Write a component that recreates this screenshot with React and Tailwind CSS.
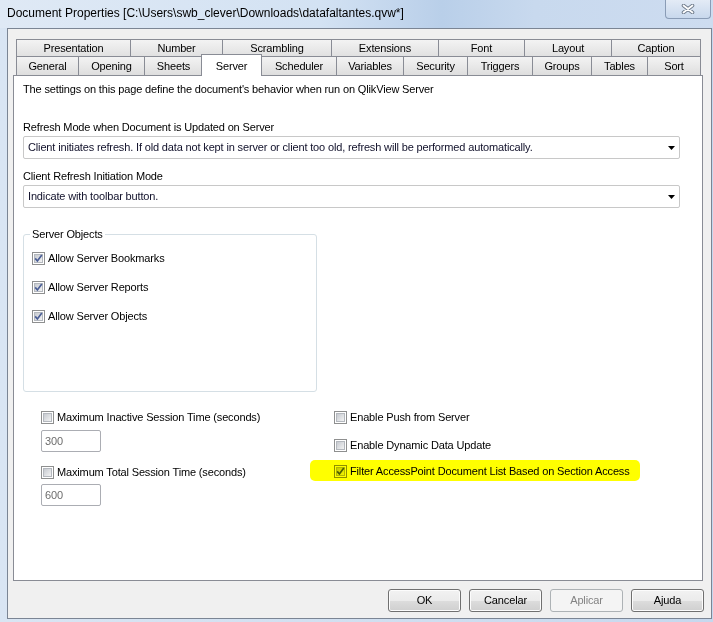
import React from "react";

const backRow = [
  ["Presentation", "w-[114px]"],
  ["Number", "w-[92px]"],
  ["Scrambling", "w-[109px]"],
  ["Extensions", "w-[107px]"],
  ["Font", "w-[86px]"],
  ["Layout", "w-[87px]"],
  ["Caption", "w-[90px]"],
];

const frontRow = [
  ["General", "w-[62px]"],
  ["Opening", "w-[66px]"],
  ["Sheets", "w-[58px]"],
  ["Server", "w-[61px]", true],
  ["Scheduler", "w-[75px]"],
  ["Variables", "w-[67px]"],
  ["Security", "w-[64px]"],
  ["Triggers", "w-[65px]"],
  ["Groups", "w-[59px]"],
  ["Tables", "w-[56px]"],
  ["Sort", "w-[54px]"],
];

const CheckBox = ({ checked }) => (
  <svg width="13" height="13" viewBox="0 0 13 13" className="shrink-0">
    <defs>
      <linearGradient id="cbfill" x1="0" y1="0" x2="1" y2="1">
        <stop offset="0" stopColor="#c3c7cd" />
        <stop offset="1" stopColor="#f6f6f6" />
      </linearGradient>
    </defs>
    <rect x="0.5" y="0.5" width="12" height="12" fill="#fff" stroke="#8e8f8f" />
    <rect x="2.5" y="2.5" width="8" height="8" fill="url(#cbfill)" stroke="#b4b8be" />
    {checked && (
      <path
        d="M3.2 6.4 L5.4 9 L9.8 3"
        fill="none"
        stroke="#4b5e96"
        strokeWidth="1.7"
      />
    )}
  </svg>
);

const Check = ({ label, checked }) => (
  <div className="flex items-center gap-[3px] h-[13px] leading-[13px] whitespace-nowrap">
    <CheckBox checked={checked} />
    <span>{label}</span>
  </div>
);

const Dropdown = ({ value }) => (
  <div className="w-[657px] h-[23px] border border-[#c8c8c8] rounded-[2px] bg-white flex items-center pl-[4px] pr-[4px]">
    <span className="flex-1 text-[#10102a] whitespace-nowrap">{value}</span>
    <svg width="7" height="4" viewBox="0 0 7 4">
      <path d="M0 0 H7 L3.5 4 Z" fill="#000" />
    </svg>
  </div>
);

const NumberBox = ({ value }) => (
  <div className="w-[60px] h-[22px] border border-[#abadb3] rounded-[2px] bg-white flex items-center pl-[3px] text-[#6d6d6d]">
    {value}
  </div>
);

const Button = ({ label, disabled }) => (
  <button
    className={
      disabled
        ? "w-[73px] h-[23px] rounded-[3px] border border-[#adb2b5] bg-[#f4f4f4] text-[#838383] text-[11px] tracking-[-0.15px]"
        : "w-[73px] h-[23px] rounded-[3px] border border-[#707070] bg-[linear-gradient(#f2f2f2,#ebebeb_50%,#dddddd_50%,#cfcfcf)] shadow-[inset_0_0_0_1px_#fcfcfc] text-black text-[11px] tracking-[-0.15px]"
    }
  >
    {label}
  </button>
);

const App = () => {
  return (
    <div className="w-[713px] h-[622px] overflow-hidden bg-[linear-gradient(90deg,#d9e5f3,#cfdef0_60%,#c6d8ee)] font-['Liberation_Sans',Arial,sans-serif] text-[11px] tracking-[-0.15px] text-black">
      {/* title bar */}
      <div className="h-[28px] flex items-start bg-[linear-gradient(90deg,#dfe9f5_0%,#d3e2f3_45%,#b9cfe9_62%,#c8d9ee_75%,#cddcf0_100%)]">
        <div className="pl-[7px] pt-[6px] text-[12px] leading-[14px] tracking-normal whitespace-nowrap">
          Document Properties [C:\Users\swb_clever\Downloads\datafaltantes.qvw*]
        </div>
        <div className="ml-auto mr-[2px] w-[46px] h-[19px] rounded-b-[4px] border border-t-0 border-[#8a9cb6] bg-[linear-gradient(#e3ebf6,#c8d8ed)] flex items-center justify-center">
          <svg width="14" height="10" viewBox="0 0 14 10">
            <path d="M2.5 1.5 L11.5 8.5 M11.5 1.5 L2.5 8.5" stroke="#707c8c" strokeWidth="3.6" strokeLinecap="round" />
            <path d="M2.5 1.5 L11.5 8.5 M11.5 1.5 L2.5 8.5" stroke="#fff" strokeWidth="1.7" strokeLinecap="round" />
          </svg>
        </div>
      </div>

      {/* client area */}
      <div className="ml-[7px] w-[705px] h-[591px] border border-[#7b8594] bg-[#f0f0f0] pt-[10px]">
        <div className="ml-[8px] flex h-[17px]">
          {backRow.map(([label, w], i) => (
            <div
              key={label}
              className={`${w} flex items-center justify-center border-t border-l border-[#898c95] bg-[linear-gradient(#f3f3f3,#e1e1e1)] ${
                i === backRow.length - 1 ? "border-r" : ""
              }`}
            >
              {label}
            </div>
          ))}
        </div>
        <div className="ml-[8px] flex items-end h-[19px]">
          {frontRow.map(([label, w, active], i) =>
            active ? (
              <div
                key={label}
                className={`${w} -mx-px h-[22px] -mb-px relative z-10 flex justify-center pt-[3px] border-t border-l border-r border-[#898c95] bg-white`}
              >
                {label}
              </div>
            ) : (
              <div
                key={label}
                className={`${w} h-full flex items-center justify-center border-t border-l border-[#898c95] bg-[linear-gradient(#f3f3f3,#dedede)] ${
                  i === frontRow.length - 1 ? "border-r" : ""
                }`}
              >
                {label}
              </div>
            )
          )}
        </div>

        {/* tab panel */}
        <div className="ml-[5px] w-[690px] h-[506px] border border-[#898c95] bg-white pt-[7px] pl-[9px]">
          <div className="h-[13px] leading-[13px]">
            The settings on this page define the document's behavior when run on QlikView Server
          </div>

          <div className="mt-[25px] h-[13px] leading-[13px]">
            Refresh Mode when Document is Updated on Server
          </div>
          <div className="mt-[2px]">
            <Dropdown value="Client initiates refresh. If old data not kept in server or client too old, refresh will be performed automatically." />
          </div>

          <div className="mt-[11px] h-[13px] leading-[13px]">Client Refresh Initiation Mode</div>
          <div className="mt-[2px]">
            <Dropdown value="Indicate with toolbar button." />
          </div>

          <fieldset className="mt-[20px] w-[294px] h-[164px] border border-[#d5dfe5] rounded-[3px] pl-[6px]">
            <legend className="px-[2px] h-[13px] leading-[13px]">Server Objects</legend>
            <div className="ml-[2px] mt-[11px] flex flex-col gap-[16px]">
              <Check label="Allow Server Bookmarks" checked />
              <Check label="Allow Server Reports" checked />
              <Check label="Allow Server Objects" checked />
            </div>
          </fieldset>

          <div className="mt-[19px] flex">
            <div className="ml-[18px] w-[293px] flex flex-col">
              <Check label="Maximum Inactive Session Time (seconds)" />
              <div className="mt-[6px]">
                <NumberBox value="300" />
              </div>
              <div className="mt-[14px]">
                <Check label="Maximum Total Session Time (seconds)" />
              </div>
              <div className="mt-[5px]">
                <NumberBox value="600" />
              </div>
            </div>
            <div className="flex flex-col">
              <Check label="Enable Push from Server" />
              <div className="mt-[15px]">
                <Check label="Enable Dynamic Data Update" />
              </div>
              <div className="mt-[13px] relative">
                <Check label="Filter AccessPoint Document List Based on Section Access" checked />
                <div className="absolute left-[-24px] top-[-5px] w-[330px] h-[21px] rounded-[5px] bg-[#ffff00] mix-blend-multiply z-10" />
              </div>
            </div>
          </div>
        </div>

        {/* buttons */}
        <div className="mt-[8px] ml-[5px] w-[691px] flex justify-end gap-[8px]">
          <Button label="OK" />
          <Button label="Cancelar" />
          <Button label="Aplicar" disabled />
          <Button label="Ajuda" />
        </div>
      </div>
    </div>
  );
};

export default App;
